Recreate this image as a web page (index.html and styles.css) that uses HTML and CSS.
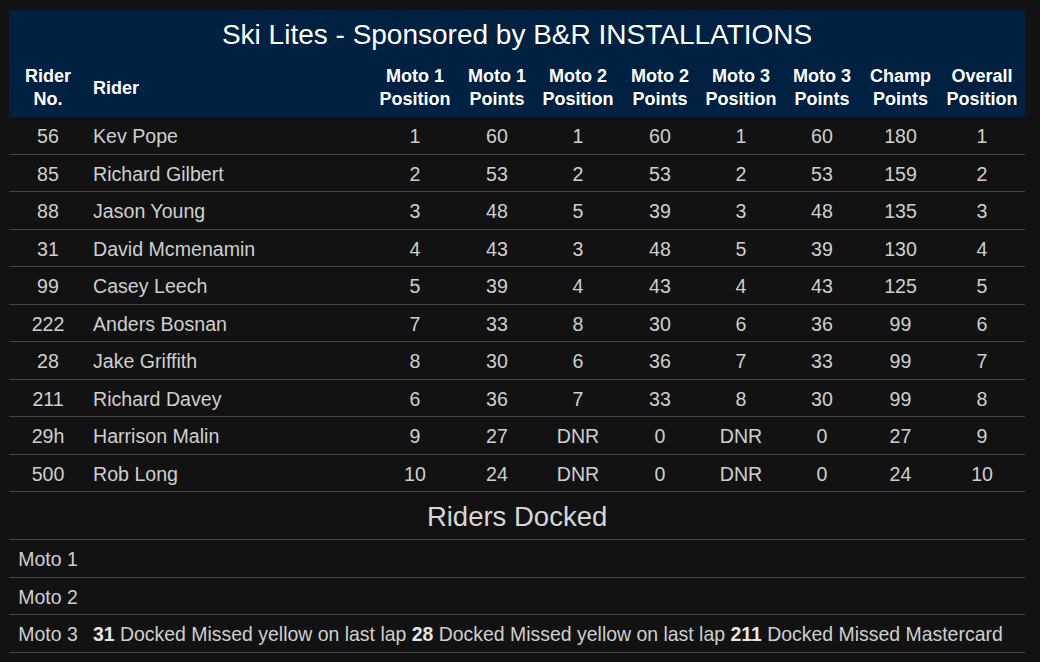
FILE: index.html
```html
<!DOCTYPE html>
<html>
<head>
<meta charset="utf-8">
<link rel="stylesheet" href="styles.css">
</head>
<body>
<div class="wrap">
<table class="results">
  <colgroup>
    <col class="c-no"><col class="c-name"><col class="c-m1pos"><col class="c-m1pts"><col class="c-m2pos"><col class="c-m2pts"><col class="c-m3pos"><col class="c-m3pts"><col class="c-champ"><col class="c-overall">
  </colgroup>
  <thead>
    <tr class="title-row"><th colspan="10">Ski Lites - Sponsored by B&amp;R INSTALLATIONS</th></tr>
    <tr class="head-row">
      <th>Rider<br>No.</th>
      <th class="left">Rider</th>
      <th>Moto 1<br>Position</th>
      <th>Moto 1<br>Points</th>
      <th>Moto 2<br>Position</th>
      <th>Moto 2<br>Points</th>
      <th>Moto 3<br>Position</th>
      <th>Moto 3<br>Points</th>
      <th>Champ<br>Points</th>
      <th>Overall<br>Position</th>
    </tr>
  </thead>
  <tbody>
    <tr><td>56</td><td class="left">Kev Pope</td><td>1</td><td>60</td><td>1</td><td>60</td><td>1</td><td>60</td><td>180</td><td>1</td></tr>
    <tr><td>85</td><td class="left">Richard Gilbert</td><td>2</td><td>53</td><td>2</td><td>53</td><td>2</td><td>53</td><td>159</td><td>2</td></tr>
    <tr><td>88</td><td class="left">Jason Young</td><td>3</td><td>48</td><td>5</td><td>39</td><td>3</td><td>48</td><td>135</td><td>3</td></tr>
    <tr><td>31</td><td class="left">David Mcmenamin</td><td>4</td><td>43</td><td>3</td><td>48</td><td>5</td><td>39</td><td>130</td><td>4</td></tr>
    <tr><td>99</td><td class="left">Casey Leech</td><td>5</td><td>39</td><td>4</td><td>43</td><td>4</td><td>43</td><td>125</td><td>5</td></tr>
    <tr><td>222</td><td class="left">Anders Bosnan</td><td>7</td><td>33</td><td>8</td><td>30</td><td>6</td><td>36</td><td>99</td><td>6</td></tr>
    <tr><td>28</td><td class="left">Jake Griffith</td><td>8</td><td>30</td><td>6</td><td>36</td><td>7</td><td>33</td><td>99</td><td>7</td></tr>
    <tr><td>211</td><td class="left">Richard Davey</td><td>6</td><td>36</td><td>7</td><td>33</td><td>8</td><td>30</td><td>99</td><td>8</td></tr>
    <tr><td>29h</td><td class="left">Harrison Malin</td><td>9</td><td>27</td><td>DNR</td><td>0</td><td>DNR</td><td>0</td><td>27</td><td>9</td></tr>
    <tr><td>500</td><td class="left">Rob Long</td><td>10</td><td>24</td><td>DNR</td><td>0</td><td>DNR</td><td>0</td><td>24</td><td>10</td></tr>
  </tbody>
  <tbody class="docked">
    <tr class="docked-title"><th colspan="10">Riders Docked</th></tr>
    <tr><td>Moto 1</td><td class="left" colspan="9"></td></tr>
    <tr><td>Moto 2</td><td class="left" colspan="9"></td></tr>
    <tr><td>Moto 3</td><td class="left" colspan="9"><b>31</b> Docked Missed yellow on last lap <b>28</b> Docked Missed yellow on last lap <b>211</b> Docked Missed Mastercard</td></tr>
  </tbody>
</table>
</div>
</body>
</html>
```

FILE: styles.css
```css
html, body {
  margin: 0;
  padding: 0;
  background: #121212;
}

.wrap {
  padding: 10px 15px 0 9px;
}

.results {
  width: 1016px;
  border-collapse: collapse;
  table-layout: fixed;
  font-family: "Liberation Sans", Arial, sans-serif;
  color: #cfcfcf;
}

.c-no { width: 78px; }
.c-name { width: 285px; }
.c-m1pos { width: 86px; }
.c-m1pts { width: 78px; }
.c-m2pos { width: 84px; }
.c-m2pts { width: 80px; }
.c-m3pos { width: 82px; }
.c-m3pts { width: 80px; }
.c-champ { width: 77px; }
.c-overall { width: 86px; }

.results th,
.results td {
  text-align: center;
  padding: 0;
}

.results .left {
  text-align: left;
  padding-left: 6px;
}

.title-row th {
  background: #002142;
  color: #ffffff;
  font-weight: normal;
  font-size: 28px;
  line-height: 32px;
  padding: 9px 0 5px;
}

.head-row th {
  background: #002142;
  color: #ffffff;
  font-weight: bold;
  font-size: 18px;
  line-height: 23px;
  padding: 9px 0 6px;
}

.results tbody td {
  font-size: 19.6px;
  line-height: 22.5px;
  padding-top: 8px;
  padding-bottom: 6px;
  border-bottom: 1px solid #444444;
  white-space: nowrap;
}

.results tbody.docked td {
  font-size: 19.45px;
}

.results tbody td.left {
  padding-left: 6px;
}

.docked-title th {
  font-weight: normal;
  font-size: 27.5px;
  line-height: 32px;
  color: #d6d6d6;
  padding: 9px 0 6px;
  border-bottom: 1px solid #444444;
}

.docked b {
  color: #e6e6e6;
  font-weight: bold;
}
```
